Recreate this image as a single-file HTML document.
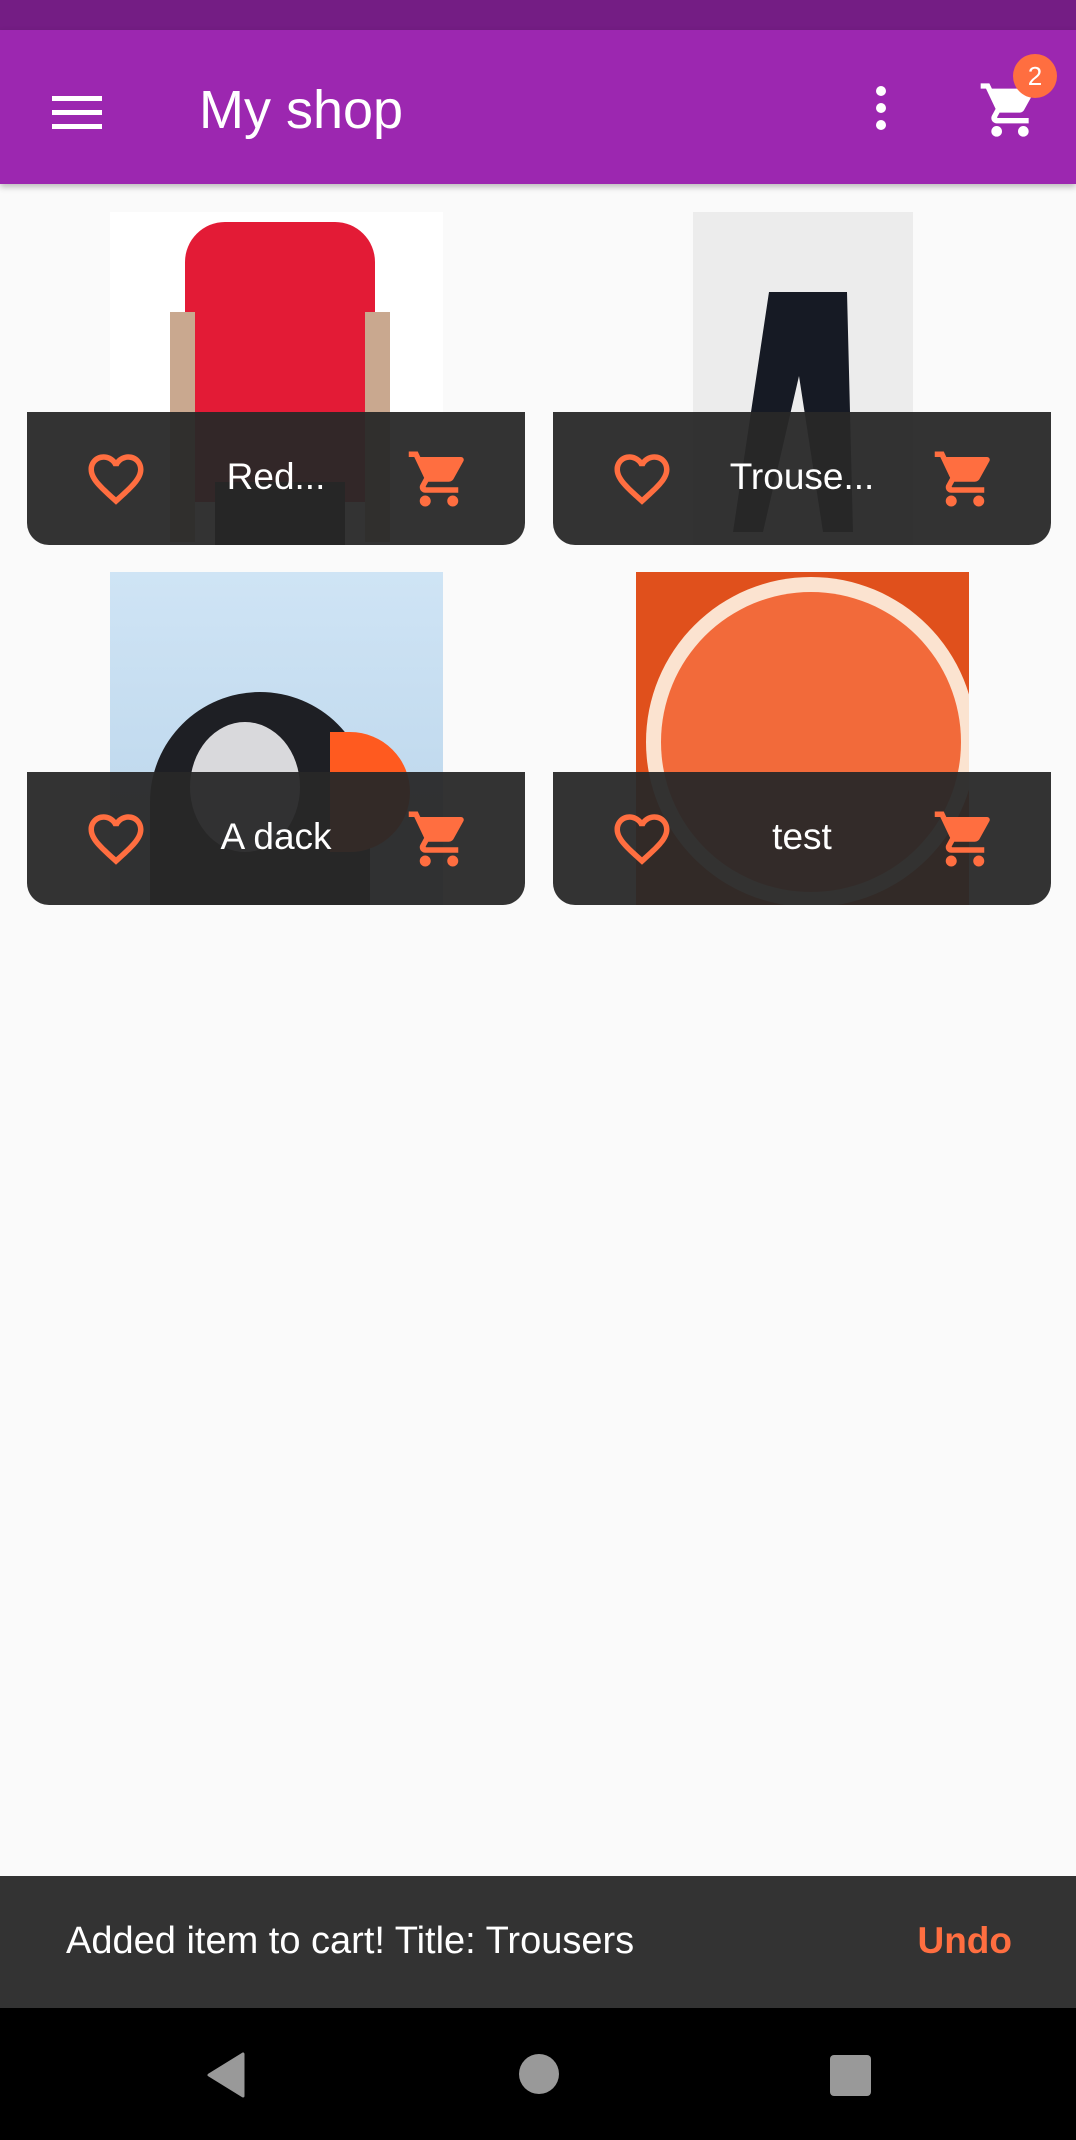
<!DOCTYPE html>
<html><head><meta charset="utf-8"><style>
*{margin:0;padding:0;box-sizing:border-box}
body{width:1076px;height:2140px;background:#fafafa;font-family:"Liberation Sans",sans-serif;position:relative;overflow:hidden}
.status{position:absolute;left:0;top:0;width:1076px;height:30px;background:#741d84}
.bar{position:absolute;left:0;top:30px;width:1076px;height:154px;background:#9c27b0;box-shadow:0 3px 6px rgba(0,0,0,.25)}
.title{position:absolute;left:199px;top:49px;color:#fff;font-size:54px}
.tile{position:absolute;width:498px;height:333px}
.img{position:absolute;left:83px;top:0;width:333px;height:333px;overflow:hidden}
.foot{position:absolute;left:0;top:200px;width:498px;height:133px;background:rgba(40,40,40,.95);border-radius:0 0 22px 22px}
.foot .t{position:absolute;left:0;right:0;top:44px;text-align:center;color:#fff;font-size:37px}
.foot svg{position:absolute;top:34px}
.snack{position:absolute;left:0;top:1876px;width:1076px;height:132px;background:#333}
.snack .m{position:absolute;left:66px;top:44px;color:#fff;font-size:38px}
.snack .u{position:absolute;right:64px;top:44px;color:#ff6e40;font-size:37px;font-weight:bold}
.nav{position:absolute;left:0;top:2008px;width:1076px;height:132px;background:#000}
</style></head><body>
<div class="status"></div>
<div class="bar">
<div style="position:absolute;left:52px;top:66px;width:50px;height:5px;background:#fff;box-shadow:0 14px 0 #fff,0 28px 0 #fff"></div>
<div class="title">My shop</div>
<div style="position:absolute;left:876px;top:56px;width:10px;height:10px;border-radius:5px;background:#fff;box-shadow:0 17px 0 #fff,0 34px 0 #fff"></div>
<svg style="position:absolute;left:978px;top:48px" width="64" height="64" viewBox="0 0 24 24"><path fill="#fff" d="M7 18c-1.1 0-2 .9-2 2s.9 2 2 2 2-.9 2-2-.9-2-2-2zM1 2v2h2l3.6 7.59-1.35 2.45c-.16.28-.25.61-.25.96 0 1.1.9 2 2 2h12v-2H7.42c-.14 0-.25-.11-.25-.25l.03-.12.9-1.63h7.45c.75 0 1.41-.41 1.75-1.03l3.58-6.49A1 1 0 0 0 20 4H5.21l-.94-2H1zm16 16c-1.1 0-2 .9-2 2s.9 2 2 2 2-.9 2-2-.9-2-2-2z"/></svg>
<div style="position:absolute;left:1013px;top:24px;width:44px;height:44px;border-radius:22px;background:#ff6e40;color:#fff;font-size:26px;text-align:center;line-height:44px">2</div>
</div>

<div class="tile" style="left:27px;top:212px">
 <div class="img" style="background:#fff">
  <div style="position:absolute;left:75px;top:10px;width:190px;height:280px;background:#e31b36;border-radius:40px 40px 0 0"></div>
  <div style="position:absolute;left:105px;top:270px;width:130px;height:70px;background:#111"></div>
  <div style="position:absolute;left:60px;top:100px;width:25px;height:230px;background:#c9a88f"></div>
  <div style="position:absolute;left:255px;top:100px;width:25px;height:230px;background:#c9a88f"></div>
 </div>
 <div class="foot"><div class="t">Red...</div>
 <svg style="left:56px" width="66" height="66" viewBox="0 0 24 24"><path fill="#ff6e40" d="M16.5 3c-1.74 0-3.41.81-4.5 2.09C10.910 3.81 9.24 3 7.5 3 4.42 3 2 5.42 2 8.5c0 3.78 3.4 6.86 8.55 11.54L12 21.35l1.45-1.32C18.6 15.36 22 12.28 22 8.5 22 5.42 19.58 3 16.5 3zm-4.4 15.55l-.1.1-.1-.1C7.14 14.24 4 11.39 4 8.5 4 6.5 5.5 5 7.5 5c1.54 0 3.04.99 3.57 2.36h1.87C13.46 5.99 14.96 5 16.5 5c2 0 3.5 1.5 3.5 3.5 0 2.89-3.14 5.74-7.9 10.05z"/></svg>
 <svg style="left:379px" width="66" height="66" viewBox="0 0 24 24"><path fill="#ff6e40" d="M7 18c-1.1 0-2 .9-2 2s.9 2 2 2 2-.9 2-2-.9-2-2-2zM1 2v2h2l3.6 7.59-1.35 2.45c-.16.28-.25.61-.25.96 0 1.1.9 2 2 2h12v-2H7.42c-.14 0-.25-.11-.25-.25l.03-.12.9-1.63h7.45c.75 0 1.41-.41 1.75-1.03l3.58-6.49A1 1 0 0 0 20 4H5.21l-.94-2H1zm16 16c-1.1 0-2 .9-2 2s.9 2 2 2 2-.9 2-2-.9-2-2-2z"/></svg></div>
</div>

<div class="tile" style="left:553px;top:212px">
 <div class="img" style="background:#ececec;left:140px;width:220px">
  <div style="position:absolute;left:40px;top:80px;width:120px;height:240px;background:#161a24;clip-path:polygon(30% 0,95% 0,100% 100%,75% 100%,55% 35%,25% 100%,0 100%)"></div>
 </div>
 <div class="foot"><div class="t">Trouse...</div>
 <svg style="left:56px" width="66" height="66" viewBox="0 0 24 24"><path fill="#ff6e40" d="M16.5 3c-1.74 0-3.41.81-4.5 2.09C10.91 3.81 9.24 3 7.5 3 4.42 3 2 5.42 2 8.5c0 3.78 3.4 6.86 8.55 11.54L12 21.35l1.45-1.32C18.6 15.36 22 12.28 22 8.5 22 5.42 19.58 3 16.5 3zm-4.4 15.55l-.1.1-.1-.1C7.14 14.24 4 11.39 4 8.5 4 6.5 5.5 5 7.5 5c1.54 0 3.04.99 3.57 2.36h1.87C13.46 5.99 14.96 5 16.5 5c2 0 3.5 1.5 3.5 3.5 0 2.89-3.14 5.74-7.9 10.05z"/></svg>
 <svg style="left:379px" width="66" height="66" viewBox="0 0 24 24"><path fill="#ff6e40" d="M7 18c-1.1 0-2 .9-2 2s.9 2 2 2 2-.9 2-2-.9-2-2-2zM1 2v2h2l3.6 7.59-1.35 2.45c-.16.28-.25.61-.25.96 0 1.1.9 2 2 2h12v-2H7.42c-.14 0-.25-.11-.25-.25l.03-.12.9-1.63h7.45c.75 0 1.41-.41 1.75-1.03l3.58-6.49A1 1 0 0 0 20 4H5.21l-.94-2H1zm16 16c-1.1 0-2 .9-2 2s.9 2 2 2 2-.9 2-2-.9-2-2-2z"/></svg></div>
</div>

<div class="tile" style="left:27px;top:572px">
 <div class="img" style="background:linear-gradient(#cfe4f5,#b9d4ea)">
  <div style="position:absolute;left:40px;top:120px;width:220px;height:260px;background:#1e1f24;border-radius:110px 110px 0 0"></div>
  <div style="position:absolute;left:80px;top:150px;width:110px;height:130px;background:#d9d9dc;border-radius:50%"></div>
  <div style="position:absolute;left:220px;top:160px;width:80px;height:120px;background:#ff5a1f;border-radius:0 60px 60px 0"></div>
 </div>
 <div class="foot"><div class="t">A dack</div>
 <svg style="left:56px" width="66" height="66" viewBox="0 0 24 24"><path fill="#ff6e40" d="M16.5 3c-1.74 0-3.41.81-4.5 2.09C10.91 3.81 9.24 3 7.5 3 4.42 3 2 5.42 2 8.5c0 3.78 3.4 6.86 8.55 11.54L12 21.35l1.45-1.32C18.6 15.36 22 12.28 22 8.5 22 5.42 19.58 3 16.5 3zm-4.4 15.55l-.1.1-.1-.1C7.14 14.24 4 11.39 4 8.5 4 6.5 5.5 5 7.5 5c1.54 0 3.04.99 3.57 2.36h1.87C13.46 5.99 14.96 5 16.5 5c2 0 3.5 1.5 3.5 3.5 0 2.89-3.14 5.74-7.9 10.05z"/></svg>
 <svg style="left:379px" width="66" height="66" viewBox="0 0 24 24"><path fill="#ff6e40" d="M7 18c-1.1 0-2 .9-2 2s.9 2 2 2 2-.9 2-2-.9-2-2-2zM1 2v2h2l3.6 7.59-1.35 2.45c-.16.28-.25.61-.25.96 0 1.1.9 2 2 2h12v-2H7.42c-.14 0-.25-.11-.25-.25l.03-.12.9-1.63h7.45c.75 0 1.41-.41 1.75-1.03l3.58-6.49A1 1 0 0 0 20 4H5.21l-.94-2H1zm16 16c-1.1 0-2 .9-2 2s.9 2 2 2 2-.9 2-2-.9-2-2-2z"/></svg></div>
</div>

<div class="tile" style="left:553px;top:572px">
 <div class="img" style="background:#e0501c">
  <div style="position:absolute;left:10px;top:5px;width:330px;height:330px;border-radius:50%;background:#fbe3d0"></div>
  <div style="position:absolute;left:25px;top:20px;width:300px;height:300px;border-radius:50%;background:#f26a3a"></div>
 </div>
 <div class="foot"><div class="t">test</div>
 <svg style="left:56px" width="66" height="66" viewBox="0 0 24 24"><path fill="#ff6e40" d="M16.5 3c-1.74 0-3.41.81-4.5 2.09C10.91 3.81 9.24 3 7.5 3 4.42 3 2 5.42 2 8.5c0 3.78 3.4 6.86 8.55 11.54L12 21.35l1.45-1.32C18.6 15.36 22 12.28 22 8.5 22 5.42 19.58 3 16.5 3zm-4.4 15.55l-.1.1-.1-.1C7.14 14.24 4 11.39 4 8.5 4 6.5 5.5 5 7.5 5c1.54 0 3.04.99 3.57 2.36h1.87C13.46 5.99 14.96 5 16.5 5c2 0 3.5 1.5 3.5 3.5 0 2.89-3.14 5.74-7.9 10.05z"/></svg>
 <svg style="left:379px" width="66" height="66" viewBox="0 0 24 24"><path fill="#ff6e40" d="M7 18c-1.1 0-2 .9-2 2s.9 2 2 2 2-.9 2-2-.9-2-2-2zM1 2v2h2l3.6 7.59-1.35 2.45c-.16.28-.25.61-.25.96 0 1.1.9 2 2 2h12v-2H7.42c-.14 0-.25-.11-.25-.25l.03-.12.9-1.63h7.45c.75 0 1.41-.41 1.75-1.03l3.58-6.49A1 1 0 0 0 20 4H5.21l-.94-2H1zm16 16c-1.1 0-2 .9-2 2s.9 2 2 2 2-.9 2-2-.9-2-2-2z"/></svg></div>
</div>

<div class="snack"><div class="m">Added item to cart! Title: Trousers</div><div class="u">Undo</div></div>
<div class="nav">
 <svg style="position:absolute;left:205px;top:44px" width="40" height="46" viewBox="0 0 40 46"><path fill="#999" d="M38 2 L38 44 L4 23 Z" stroke="#999" stroke-width="3" stroke-linejoin="round"/></svg>
 <div style="position:absolute;left:519px;top:46px;width:40px;height:40px;border-radius:50%;background:#999"></div>
 <div style="position:absolute;left:830px;top:47px;width:41px;height:41px;border-radius:4px;background:#999"></div>
</div>
</body></html>
